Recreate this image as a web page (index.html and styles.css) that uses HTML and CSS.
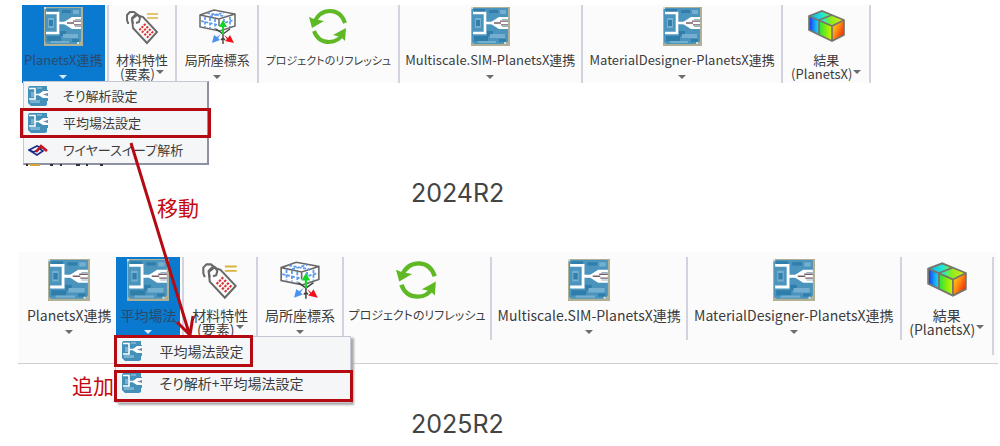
FILE: index.html
```html
<!DOCTYPE html>
<html lang="ja">
<head>
<meta charset="utf-8">
<title>PlanetsX 2024R2 / 2025R2</title>
<link rel="stylesheet" href="styles.css">
</head>
<body>
<svg class="defs" aria-hidden="true">
  <defs>
    <linearGradient id="g-left" x1="0" y1="0" x2="1" y2="0"><stop offset="0" stop-color="#1c2df0"/><stop offset=".6" stop-color="#16a5f5"/><stop offset="1" stop-color="#10e8e0"/></linearGradient>
    <linearGradient id="g-mid" x1="0" y1="0" x2="1" y2="0"><stop offset="0" stop-color="#22e04a"/><stop offset=".5" stop-color="#7cec10"/><stop offset="1" stop-color="#d8f000"/></linearGradient>
    <linearGradient id="g-right" x1="0" y1="0" x2="1" y2=".8"><stop offset="0" stop-color="#f4ee10"/><stop offset=".5" stop-color="#ff8a10"/><stop offset="1" stop-color="#f01808"/></linearGradient>
    <linearGradient id="g-top" x1="0" y1="0" x2="1" y2="0"><stop offset="0" stop-color="#18a8f0"/><stop offset=".4" stop-color="#20ead0"/><stop offset=".6" stop-color="#80ee20"/><stop offset="1" stop-color="#f0e810"/></linearGradient>
  </defs>
  <symbol id="planets" viewBox="0 0 39 39">
    <rect width="39" height="39" fill="#aeb196"/>
    <path d="M1 1H37V34L34 37H3L1 35Z" fill="#4b94bd"/>
    <path d="M3 2h11v3H3zM18 3h9v3h-9zM3 29h14v5H3zM16 24h6v5h-6zM28 32h7v3h-7z" fill="#2f7daa"/>
    <path d="M19 27h15v4H19zM4 11h6v10H4zM29 3h6v4h-6zM7 34h18v2H7z" fill="#75afd0"/>
    <path d="M5 13h4v6H5z" fill="#327fac"/>
    <path d="M2 6H14V26H2M14 16H22" fill="none" stroke="#fff" stroke-width="2.6"/>
    <path d="M20 15L28 10H37V22H28L20 17Z" fill="#fff"/>
    <path d="M31 12.5H37M31 19.5H37" stroke="#8fb8cc" stroke-width="1"/>
    <path d="M23 16H30M29 14.2H37M30 17.8H37" stroke="#765f68" stroke-width="1.3"/>
    <path d="M0 0h2v2H0zM33 35h2v2h-2z" fill="#d8dfd8"/>
  </symbol>
  <symbol id="planets-small" viewBox="0 0 20 20">
    <path d="M1 0H19V4H20V15H19V19L17 20H3L0 17V2Z" fill="#4590b9"/>
    <path d="M2 14h10v3H2zM3 6h3v5H3zM9 1h5v2H9z" fill="#78b0cf"/>
    <path d="M1 2.5H7V13H1M7 8.5H12" fill="none" stroke="#fff" stroke-width="1.6"/>
    <path d="M11 8L15 5H20V7L15 8.5L20 10V12H15L11 9.5Z" fill="#fff"/>
    <path d="M16 8.5H20" stroke="#8d8790"/>
  </symbol>
  <symbol id="tag" viewBox="0 0 39 39">
    <path d="M24 7H35M24 11H35" stroke="#dcb33c" stroke-width="1.7"/>
    <g fill="none" stroke="#686868" stroke-width="1.9">
      <path d="M6 16H5L4 13V8L7 5H11L15 8"/>
      <path d="M10 21L9 12L14 8L20 10L34 25L24 36Z" fill="#fcfcfc"/>
      <path d="M10 17L9 11L12 8H15L17 11L16 15L13 16"/>
    </g>
    <path d="M21 17L30 26L25 31L16 22Z" fill="#fff"/>
    <path d="M21 17L30 26M18.700 19.300L27.700 28.300M16.400 21.600L25.400 30.600" stroke="#d93535" stroke-width="2.300" stroke-dasharray="2 1.600"/>
  </symbol>
  <symbol id="axes" viewBox="0 0 39 39">
    <path d="M2 8L16 3L37 7V19L22 25L2 20Z" fill="#fff"/>
    <path d="M2 8L16 3L37 7V19L22 24L2 20ZM2 8L21 12L37 7M21 12V19" fill="none" stroke="#686868" stroke-width="1.500"/>
    <path d="M9 6L28 9.500M12 9.500L26 5.500M7 10V20M12 11V21M17 12V22M3 14L20 18M26 12V21M32 10V20M23 17L36 13" fill="none" stroke="#5d9aea" stroke-width="1.700" stroke-dasharray="3 1.500"/>
    <path d="M18 22L25 27L32 22M25 27V37M23 33L25 31L27 33" fill="none" stroke="#444" stroke-width="1.400"/>
    <path d="M24 27V20H21L25 13L29 20H26V27Z" fill="#13d629"/>
    <path d="M23 27L20 31L22 33L14 36L16 28L19 30Z" fill="#4b92ee"/>
    <path d="M26 28L30 31L32 28L36 36L27 34L29 32Z" fill="#f11118"/>
  </symbol>
  <symbol id="refresh" viewBox="0 0 39 39">
    <path d="M5 16Q10 4 21 4Q32 4 36 16" fill="none" stroke="#5eb924" stroke-width="4"/>
    <path d="M0 10L5 12L15 14L3 21Z" fill="#5eb924"/>
    <path d="M5 24Q9 35 20 35Q30 35 34 26" fill="none" stroke="#5eb924" stroke-width="4"/>
    <path d="M37 21L36 34L32 30L24 28Z" fill="#5eb924"/>
  </symbol>
  <symbol id="result" viewBox="0 0 39 39">
    <path d="M2 9L12 13V28L2 23Z" fill="url(#g-left)"/>
    <path d="M12 13L25 19V34L12 28Z" fill="url(#g-mid)"/>
    <path d="M25 19L37 13V28L25 34Z" fill="url(#g-right)"/>
    <path d="M2 9L15 4L37 13L25 19Z" fill="url(#g-top)"/>
    <path d="M2 9L15 4L37 13V28L25 34L2 23ZM2 9L25 19L37 13M25 19V34M12 13V28M12 13L25 8" fill="none" stroke="#76766c" stroke-width="1.700"/>
  </symbol>
  <symbol id="wire" viewBox="0 0 20 14">
    <path d="M1 7L9 3L13 5L6 9ZM1 7L9 12L15 8L12 6" fill="none" stroke="#1a2c88" stroke-width="1.600"/>
    <path d="M8 9L13 3L19 8" fill="none" stroke="#c41420" stroke-width="2.600"/>
  </symbol>
</svg>

<main class="figure">
  <section class="release release-old">
    <div class="ribbon ribbon-old">
      <div class="cell w86">
        <button class="tool active"><svg class="icon"><use href="#planets"/></svg><span>PlanetsX連携</span><i class="caret"></i></button>
        <div class="menu menu-old">
          <button class="entry"><svg class="mini"><use href="#planets-small"/></svg>そり解析設定</button>
          <button class="entry marked"><svg class="mini"><use href="#planets-small"/></svg>平均場法設定</button>
          <button class="entry"><svg class="mini"><use href="#wire"/></svg>ワイヤースイープ解析</button>
          <svg class="remnant" viewBox="0 0 90 2" aria-hidden="true"><path d="M2 1h2M26 1h3M36 1h2M52 1h4M62 1h2M76 1h3" stroke="#333" stroke-width="2"/><path d="M6 1h10" stroke="#d9a432" stroke-width="2"/></svg>
        </div>
      </div>
      <div class="cell w68"><button class="tool"><svg class="icon"><use href="#tag"/></svg><span>材料特性</span><span class="second">(要素)<i class="caret"></i></span></button></div>
      <div class="cell w81"><button class="tool"><svg class="icon"><use href="#axes"/></svg><span>局所座標系</span><i class="caret"></i></button></div>
      <div class="cell w141"><button class="tool"><svg class="icon"><use href="#refresh"/></svg><span class="kana">プロジェクトのリフレッシュ</span></button></div>
      <div class="cell w184"><button class="tool"><svg class="icon"><use href="#planets"/></svg><span>Multiscale.SIM-PlanetsX連携</span><i class="caret"></i></button></div>
      <div class="cell w202"><button class="tool"><svg class="icon"><use href="#planets"/></svg><span>MaterialDesigner-PlanetsX連携</span><i class="caret"></i></button></div>
      <div class="cell w87"><button class="tool"><svg class="icon"><use href="#result"/></svg><span>結果</span><span class="second">(PlanetsX)<i class="caret"></i></span></button></div>
    </div>
    <p class="caption">2024R2</p>
  </section>

  <section class="release release-new">
    <div class="ribbon ribbon-new">
      <div class="cell w92 plain"><button class="tool"><svg class="icon"><use href="#planets"/></svg><span>PlanetsX連携</span><i class="caret"></i></button></div>
      <div class="cell w67">
        <button class="tool active"><svg class="icon"><use href="#planets"/></svg><span>平均場法</span><i class="caret"></i></button>
        <div class="menu menu-new">
          <button class="entry marked short"><svg class="mini"><use href="#planets-small"/></svg>平均場法設定</button>
          <button class="entry marked raised"><svg class="mini"><use href="#planets-small"/></svg>そり解析+平均場法設定</button>
        </div>
      </div>
      <div class="cell w73"><button class="tool"><svg class="icon"><use href="#tag"/></svg><span>材料特性</span><span class="second">(要素)<i class="caret"></i></span></button></div>
      <div class="cell w85"><button class="tool"><svg class="icon"><use href="#axes"/></svg><span>局所座標系</span><i class="caret"></i></button></div>
      <div class="cell w149"><button class="tool"><svg class="icon"><use href="#refresh"/></svg><span class="kana">プロジェクトのリフレッシュ</span></button></div>
      <div class="cell w197"><button class="tool"><svg class="icon"><use href="#planets"/></svg><span>Multiscale.SIM-PlanetsX連携</span><i class="caret"></i></button></div>
      <div class="cell w215"><button class="tool"><svg class="icon"><use href="#planets"/></svg><span>MaterialDesigner-PlanetsX連携</span><i class="caret"></i></button></div>
      <div class="cell w92 last"><button class="tool"><svg class="icon"><use href="#result"/></svg><span>結果</span><span class="second">(PlanetsX)<i class="caret"></i></span></button></div>
    </div>
    <p class="caption">2025R2</p>
  </section>

  <svg class="arrow" viewBox="0 0 210 350" aria-hidden="true"><path d="M131 143L189 333M177 322L190 335L193 316"/></svg>
  <span class="note moved">移動</span>
  <span class="note added">追加</span>
</main>
</body>
</html>
```

FILE: styles.css
```css
* { box-sizing: border-box; }
body {
  margin: 0;
  background: #fff;
  color: #3c3c3c;
  font-family: "Noto Sans CJK JP", sans-serif;
  font-feature-settings: "palt";
}
.defs { position: absolute; width: 0; height: 0; }
.figure { position: relative; padding-top: 5px; }
button {
  border: 0;
  padding: 0;
  background: none;
  color: inherit;
  font: inherit;
  font-feature-settings: inherit;
}

.ribbon { display: flex; background: #fbfbfc; }
.ribbon-old { margin: 0 129px 0 22px; font-size: 13px; line-height: 14px; }
.ribbon-new {
  margin: 0 2px 0 18px;
  padding: 5px 4px 8px 6px;
  border-bottom: 1px solid #cfcfd3;
  font-size: 14px;
  line-height: 14px;
}
.cell {
  position: relative;
  flex: 1 1 0;
  min-width: 0;
  display: flex;
  border-right: 2px solid #d3d3df;
}
.ribbon-new .cell { margin-bottom: 15px; }
.ribbon-new .last { margin-bottom: 0; }
.plain { border-right-color: transparent; }
.tool {
  flex: 1;
  min-width: 0;
  display: flex;
  flex-direction: column;
  align-items: center;
  white-space: nowrap;
}
.ribbon-old .tool { height: 78px; padding-top: 2px; }
.ribbon-new .tool { height: 83px; padding-top: 2px; }
.tool.active { margin-right: 2px; background: #0a79d0; color: #2b4a6a; }
.icon { width: 39px; height: 39px; flex: none; margin-bottom: 7px; }
.ribbon-new .icon { width: 42px; height: 42px; }
.kana { font-size: 11px; }
.ribbon-new .kana { font-size: 12px; }
.caret {
  border: 4px solid transparent;
  border-top-color: #6c6c70;
  border-bottom: 0;
  margin-top: 8px;
}
.active .caret { border-top-color: #d6ecfb; }
.second { display: flex; }
.second .caret { margin: 3px 0 0 1px; }

.w86 { flex-grow: 86; }
.w68 { flex-grow: 68; }
.w81 { flex-grow: 81; }
.w141 { flex-grow: 141; }
.w184 { flex-grow: 184; }
.w202 { flex-grow: 202; }
.w87 { flex-grow: 87; }
.w67 { flex-grow: 67; }
.w73 { flex-grow: 73; }
.w85 { flex-grow: 85; }
.w149 { flex-grow: 149; }
.w197 { flex-grow: 197; }
.w215 { flex-grow: 215; }
.w92 { flex-grow: 92; }

.menu {
  position: absolute;
  z-index: 1;
  display: flex;
  flex-direction: column;
  background: #f5f6f8;
  border: 1px solid #c5c8d2;
  white-space: nowrap;
}
.menu-old {
  top: 76px;
  left: 1px;
  width: 186px;
  border-right: 2px solid #8d91a3;
  border-bottom: 2px solid #8d91a3;
}
.menu-new {
  top: 79px;
  left: -1px;
  width: 236px;
  gap: 3px;
  box-shadow: 3px 2px 2px #aaa;
}
.entry { display: flex; align-items: center; text-align: left; }
.menu-old .entry { height: 27px; padding-left: 4px; gap: 15px; }
.menu-new .entry { height: 32px; padding-left: 5px; gap: 17px; }
.mini { width: 20px; height: 20px; flex: none; }
.marked { border: 3px solid #b50a12; }
.menu-old .marked { height: 30px; margin: -1px -4px -2px; padding-left: 5px; }
.menu-new .marked { margin: 0 -3px 0 -2px; }
.menu-new .short { width: 139px; margin-top: -2px; }
.menu-new .raised { padding-bottom: 6px; }
.remnant { position: absolute; top: 100%; left: 0; width: 90px; height: 4px; }

.caption {
  margin: 0;
  padding-left: 411px;
  font: 25px/30px Inter, sans-serif;
  color: #444;
}
.release-old .caption { padding-top: 95px; padding-bottom: 44px; }
.release-new .caption { padding-top: 45px; }

.arrow {
  position: absolute;
  z-index: 2;
  top: 0;
  left: 0;
  width: 210px;
  height: 350px;
  fill: none;
  stroke: #b50a12;
  stroke-width: 3;
  pointer-events: none;
}
.note { position: absolute; font-size: 21px; line-height: 24px; color: #c40810; }
.moved { left: 157px; top: 195px; }
.added { left: 72px; top: 373px; }
```
